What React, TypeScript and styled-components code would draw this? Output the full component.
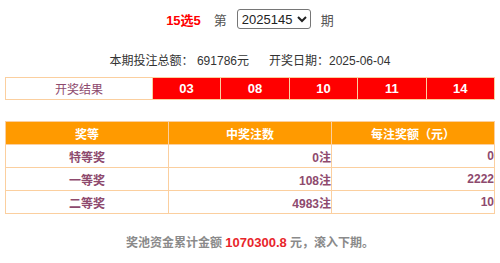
import React from 'react';
import styled, {createGlobalStyle} from 'styled-components';

const GlobalStyle = createGlobalStyle`
  body {
    margin: 0;
    background: #fff;
    font-family: "Liberation Sans", "Noto Sans CJK SC", sans-serif;
    font-size: 12px;
    color: #333;
  }
`;

const Page = styled.div`
  padding: 0 5px;
`;

const IssueBar = styled.div`
  display: flex;
  justify-content: center;
  align-items: center;
  gap: 10px;
  height: 22px;
  margin-top: 8px;
`;

const GameName = styled.span`
  color: #f00;
  font-weight: bold;
  font-size: 13px;
  margin-right: 3px;
`;

const Label = styled.span`
  color: #555;
  font-size: 13px;
`;

const IssueSelect = styled.select`
  height: 20px;
  width: 74px;
  font-family: inherit;
  font-size: 13px;
  color: #222;
  border: 1px solid #767676;
  border-radius: 3px;
  background: #fff;
  padding: 0;
`;

const Info = styled.div`
  display: flex;
  justify-content: center;
  gap: 20px;
  margin-top: 21px;
  font-size: 12px;
  color: #333;
  line-height: 20px;
`;

const Grid = styled.table`
  width: 100%;
  border-collapse: separate;
  border-spacing: 1px;
  background: #fbcf9f;
  table-layout: fixed;
`;

const DrawGrid = styled(Grid)`
  margin-top: 6px;
`;

const PrizeGrid = styled(Grid)`
  margin-top: 21px;
`;

const Cell = styled.td<{$align?: string; $plain?: boolean}>`
  height: 22px;
  padding: 0;
  background: #fff;
  color: #8e4a6e;
  text-align: ${p => p.$align || 'center'};
  font-size: 12px;
  font-weight: ${p => (p.$plain ? 'normal' : 'bold')};
`;

const Ball = styled.td`
  height: 21px;
  padding: 0;
  background: #f00;
  color: #fff;
  font-weight: bold;
  text-align: center;
  font-size: 13px;
`;

const Head = styled.th`
  height: 22px;
  padding: 0;
  background: #ff9a00;
  color: #fff;
  font-size: 12px;
  font-weight: bold;
`;

const Footer = styled.div`
  text-align: center;
  margin-top: 19px;
  color: #8a8a8a;
  font-weight: bold;
  font-size: 12px;
`;

const Amount = styled.span`
  color: #e8252b;
  font-size: 13px;
`;

const balls = ['03', '08', '10', '11', '14'];

const prizes = [
  {level: '特等奖', count: '0注', money: '0'},
  {level: '一等奖', count: '108注', money: '2222'},
  {level: '二等奖', count: '4983注', money: '10'},
];

const App = () => (
  <Page>
    <GlobalStyle />
    <IssueBar>
      <GameName>15选5</GameName>
      <Label>第</Label>
      <IssueSelect defaultValue="2025145">
        <option value="2025145">2025145</option>
      </IssueSelect>
      <Label>期</Label>
    </IssueBar>
    <Info>
      <span>本期投注总额： 691786元</span>
      <span>开奖日期：2025-06-04</span>
    </Info>
    <DrawGrid>
      <colgroup>
        <col style={{width: '30.2%'}} />
      </colgroup>
      <tbody>
        <tr>
          <Cell $plain style={{height: 21}}>开奖结果</Cell>
          {balls.map(b => <Ball key={b}>{b}</Ball>)}
        </tr>
      </tbody>
    </DrawGrid>
    <PrizeGrid>
      <thead>
        <tr>
          <Head>奖等</Head>
          <Head>中奖注数</Head>
          <Head>每注奖额（元）</Head>
        </tr>
      </thead>
      <tbody>
        {prizes.map(p => (
          <tr key={p.level}>
            <Cell>{p.level}</Cell>
            <Cell $align="right">{p.count}</Cell>
            <Cell $align="right">{p.money}</Cell>
          </tr>
        ))}
      </tbody>
    </PrizeGrid>
    <Footer>
      奖池资金累计金额 <Amount>1070300.8</Amount> 元，滚入下期。
    </Footer>
  </Page>
);

export default App;
